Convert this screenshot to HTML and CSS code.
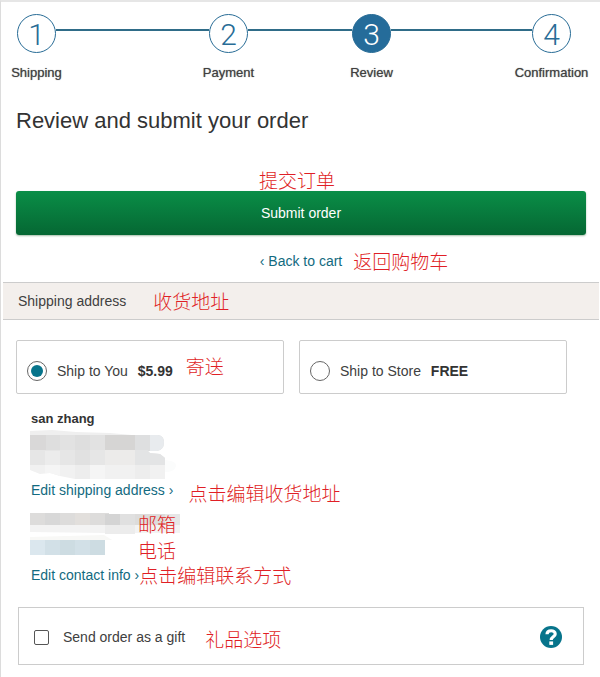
FILE: index.html
```html
<!DOCTYPE html>
<html lang="en">
<head>
    <meta charset="UTF-8">
    <meta name="viewport" content="width=device-width, initial-scale=1.0">
    <title>Review and submit your order</title>
    <link rel="stylesheet" href="styles.css">
</head>
<body>
    <ol class="steps">
        <li class="step"><span class="circle">1</span><span class="step-name">Shipping</span></li>
        <li class="line line-long" aria-hidden="true"></li>
        <li class="step"><span class="circle">2</span><span class="step-name">Payment</span></li>
        <li class="line line-short" aria-hidden="true"></li>
        <li class="step"><span class="circle current">3</span><span class="step-name">Review</span></li>
        <li class="line line-mid" aria-hidden="true"></li>
        <li class="step"><span class="circle">4</span><span class="step-name">Confirmation</span></li>
    </ol>

    <form class="order">
        <section class="submit">
            <h1>Review and submit your order</h1>
            <p class="note" lang="zh">提交订单</p>
            <button type="submit" class="submit-button">Submit order</button>
            <div class="back">
                <a href="#">‹ Back to cart</a>
                <span class="note" lang="zh">返回购物车</span>
            </div>
        </section>

        <div class="bar">
            <h2>Shipping address</h2>
            <span class="note" lang="zh">收货地址</span>
        </div>

        <div class="options">
            <div class="option">
                <input type="radio" id="ship-you" name="ship" checked>
                <label for="ship-you">Ship to You <b>$5.99</b></label>
                <span class="note" lang="zh">寄送</span>
            </div>
            <div class="option">
                <input type="radio" id="ship-store" name="ship">
                <label for="ship-store">Ship to Store <b>FREE</b></label>
            </div>
        </div>

        <section class="details">
            <p class="name">san zhang</p>
            <!-- hidden address -->
            <svg class="mosaic" width="150" height="51" viewBox="0 0 150 51" aria-hidden="true">
                <path d="M0 2L22 1L46 3L80 4L102 6L80 7H0z" fill="#efefef"/>
                <path d="M0 6H128Q134 7 134 13Q134 21 127 22H0z" fill="#dedede"/>
                <path d="M0 6H16V22H0z" fill="#d9d8d8"/>
                <path d="M30 6H45V22H30zM60 6H75V22H60z" fill="#e2e2e2"/>
                <path d="M75 6H105V22H75z" fill="#d6d5d4"/>
                <path d="M105 6H120V22H105z" fill="#dedfe0"/>
                <path d="M120 6H128Q134 7 134 13Q134 21 127 22H120z" fill="#e8ebee"/>
                <path d="M0 21H117L120 24L130 25L135 29V36H0z" fill="#e6e6e6"/>
                <path d="M15 22H30V36H15z" fill="#ececec"/>
                <path d="M45 21H60V36H45z" fill="#e1e1e1"/>
                <path d="M75 21H105V36H75z" fill="#ecebea"/>
                <path d="M105 21H117L120 24L130 25L135 29V36H105z" fill="#e3e4e5"/>
                <path d="M0 36H135V50H45L30 47L20 44L10 45L0 41z" fill="#f1f1f1"/>
                <path d="M15 36H30V47L20 44L15 44zM60 36H75V50H60z" fill="#f5f5f5"/>
                <path d="M45 36H60V50H45zM105 36H120V50H105z" fill="#ededed"/>
                <path d="M135 31Q147 32 146 37Q145 43 135 43z" fill="#fbfcfc"/>
            </svg>
            <div class="row row-address">
                <a href="#">Edit shipping address ›</a>
                <span class="note note-low" lang="zh">点击编辑收货地址</span>
            </div>
        </section>

        <section class="details contact">
            <div class="hidden-contact">
                <!-- hidden email and phone -->
                <svg class="mosaic" width="150" height="44" viewBox="0 0 150 44" aria-hidden="true">
                    <path d="M0 0H79V1H150V12H0z" fill="#dddcdb"/>
                    <path d="M15 0H30V12H15z" fill="#d8d8d8"/>
                    <path d="M45 0H60V12H45z" fill="#e2dfdc"/>
                    <path d="M75 1H90V12H75z" fill="#d4d4d4"/>
                    <path d="M90 1H105V12H90z" fill="#e0e0e0"/>
                    <path d="M135 1H150V12H135z" fill="#e6e6e6"/>
                    <path d="M0 12H150V20H75L0 19z" fill="#f3f3f3"/>
                    <path d="M75 12H105V21H75z" fill="#ececec"/>
                    <path d="M0 24L74 22L82 27H0z" fill="#f8f8f6"/>
                    <path d="M0 27H75V42H0z" fill="#d2e0e7"/>
                    <path d="M0 27H15V42H0z" fill="#dbe7ee"/>
                    <path d="M30 27H45V42H30zM60 27H75V42H60z" fill="#cddce2"/>
                </svg>
                <div class="contact-notes">
                    <span class="note" lang="zh">邮箱</span>
                    <span class="note" lang="zh">电话</span>
                </div>
            </div>
            <div class="row">
                <a href="#">Edit contact info ›</a>
                <span class="note" lang="zh">点击编辑联系方式</span>
            </div>
        </section>

        <div class="gift">
            <input type="checkbox" id="gift">
            <label for="gift">Send order as a gift</label>
            <span class="note note-low" lang="zh">礼品选项</span>
            <button type="button" class="help" aria-label="Help">
                <svg width="22" height="22" viewBox="0 0 22 22" aria-hidden="true">
                    <circle cx="11" cy="11" r="11" fill="#07748b"/>
                    <path d="M7 8.200C7.200 3.600 15.200 3.700 15.200 7.900C15.200 10.700 11.200 10.800 11.200 13.900" fill="none" stroke="#fff" stroke-width="3.200"/>
                    <rect x="9.300" y="15.400" width="3.800" height="3.500" fill="#fff"/>
                </svg>
            </button>
        </div>
    </form>
</body>
</html>
```

FILE: styles.css
```css
/* Global Styles */
* {
    box-sizing: border-box;
}
body {
    margin: 0;
    min-height: 100vh;
    border-top: 2px solid #e6e6e6;
    border-left: 1px solid #dcdcdc;
    background-color: #fff;
    color: #404040;
    font-family: "Liberation Sans", Arial, sans-serif;
    font-size: 14px;
    line-height: 20px;
}
h1, h2, p, ol {
    margin: 0;
    padding: 0;
    font-weight: normal;
}
a {
    color: #126a80;
    text-decoration: none;
}
.note {
    color: #e01f26;
    font-family: "Noto Sans CJK SC", sans-serif;
    font-size: 19px;
    font-weight: 300;
    line-height: 20px;
    white-space: nowrap;
}
.note-low {
    padding-top: 3px;
}
/* Progress Steps */
.steps {
    display: flex;
    padding: 12px 29px 0 16px;
    list-style: none;
}
.step {
    display: flex;
    flex-direction: column;
    align-items: center;
    width: 39px;
}
.circle {
    width: 39px;
    height: 39px;
    border: 1px solid #286c96;
    border-radius: 50%;
    color: #286c96;
    font-family: Roboto, sans-serif;
    font-size: 30px;
    font-weight: 300;
    line-height: 40px;
    text-align: center;
}
.circle.current {
    background-color: #256c9a;
    color: #fff;
}
.step-name {
    margin-top: 12px;
    color: #404040;
    font-size: 13px;
    line-height: 16px;
    text-shadow: 0 0 1px #777;
    white-space: nowrap;
}
.line {
    height: 2px;
    margin-top: 15px;
    background-color: #2f6c88;
}
.line-long {
    flex: 153;
}
.line-short {
    flex: 104;
}
.line-mid {
    flex: 141;
}
/* Submit */
.submit {
    padding: 26px 14px 0 15px;
}
.submit h1 {
    color: #333;
    font-size: 22px;
    line-height: 28px;
}
.submit p {
    margin: 35px 8px 1px 0;
    text-align: center;
}
.submit-button {
    display: block;
    width: 100%;
    height: 44px;
    border: none;
    border-radius: 3px;
    background: linear-gradient(#0a8e47, #056733);
    box-shadow: 0 1px 2px #a5bda9;
    color: #fff;
    font: inherit;
    cursor: pointer;
}
.back {
    display: grid;
    grid-template-columns: 1fr auto 1fr;
    gap: 11px;
    margin: 16px 0 11px;
}
.back a {
    grid-column: 2;
}
/* Section Bar */
.bar {
    display: flex;
    align-items: center;
    gap: 27px;
    height: 38px;
    margin: 0 1px 0 2px;
    padding-left: 15px;
    border: solid #ccc;
    border-width: 1px 0;
    background-color: #f3efec;
}
.bar h2 {
    font-size: 14px;
}
/* Shipping Options */
.options {
    display: grid;
    grid-template-columns: 1fr 1fr;
    gap: 15px;
    padding: 20px 33px 15px 15px;
}
.option {
    display: flex;
    align-items: center;
    height: 54px;
    padding: 8px 10px 0;
    border: 1px solid #ccc;
    border-radius: 2px;
}
.option input {
    appearance: none;
    width: 20px;
    height: 20px;
    margin: 0 10px 0 0;
    border: 1px solid #666;
    border-radius: 50%;
}
.option input:checked {
    background: #07748b;
    background-clip: content-box;
    padding: 3px;
}
.option b {
    margin-left: 6px;
    color: #333;
}
.option .note {
    margin: 0 0 10px 13px;
}
/* Address and Contact */
.details {
    padding-left: 29px;
}
.name {
    padding-left: 1px;
    color: #333;
    font-size: 13px;
    font-weight: bold;
}
.mosaic {
    display: block;
}
.row {
    display: flex;
    padding-left: 1px;
}
.row-address {
    gap: 15px;
}
.contact {
    padding-top: 10px;
}
.hidden-contact {
    position: relative;
    margin-bottom: 8px;
}
.contact-notes {
    position: absolute;
    top: 1px;
    left: 108px;
    display: grid;
    gap: 6px;
}
/* Gift */
.gift {
    display: flex;
    align-items: center;
    height: 58px;
    margin: 22px 16px 12px 17px;
    padding: 2px 21px 0 15px;
    border: 1px solid #ccc;
}
.gift input {
    appearance: none;
    width: 15px;
    height: 15px;
    margin: 0 14px 0 0;
    border: 1px solid #555;
    border-radius: 2px;
}
.gift .note {
    margin-left: 20px;
}
.help {
    display: flex;
    margin-left: auto;
    padding: 0;
    border: none;
    background: none;
    cursor: pointer;
}
```
